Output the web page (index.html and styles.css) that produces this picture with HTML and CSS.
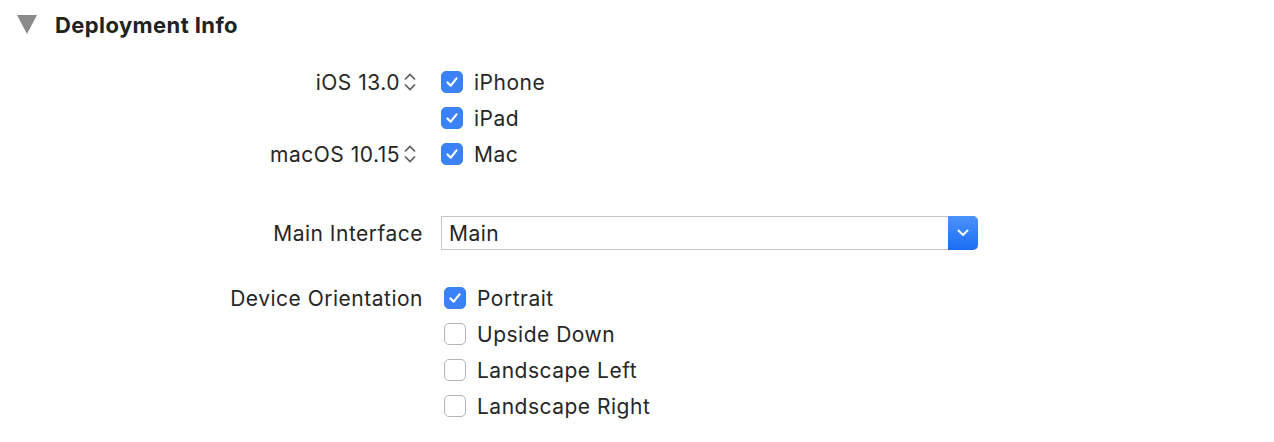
FILE: index.html
```html
<!DOCTYPE html>
<html>
<head>
<meta charset="utf-8">
<link rel="stylesheet" href="styles.css">
</head>
<body>
<div class="panel">
  <div class="header">
    <svg class="disclosure" width="20" height="19" viewBox="0 0 20 19"><polygon points="0,0 20,0 10,19" fill="#8a8a8a"/></svg>
    <span class="title">Deployment Info</span>
  </div>

  <div class="group platforms">
    <div class="row">
      <div class="label"><span>iOS 13.0</span>
        <svg class="stepper" width="14" height="18" viewBox="0 0 14 18"><polyline points="2,6.5 7,1.5 12,6.5" fill="none" stroke="#5a5a5a" stroke-width="1.6"/><polyline points="2,11.5 7,16.5 12,11.5" fill="none" stroke="#5a5a5a" stroke-width="1.6"/></svg>
      </div>
      <div class="control"><span class="cb on"><svg viewBox="0 0 22 22"><polyline points="6,11.5 9.6,15 16,7" fill="none" stroke="#fff" stroke-width="2.4" stroke-linecap="round" stroke-linejoin="round"/></svg></span><span class="text">iPhone</span></div>
    </div>
    <div class="row">
      <div class="label"></div>
      <div class="control"><span class="cb on"><svg viewBox="0 0 22 22"><polyline points="6,11.5 9.6,15 16,7" fill="none" stroke="#fff" stroke-width="2.4" stroke-linecap="round" stroke-linejoin="round"/></svg></span><span class="text">iPad</span></div>
    </div>
    <div class="row">
      <div class="label"><span>macOS 10.15</span>
        <svg class="stepper" width="14" height="18" viewBox="0 0 14 18"><polyline points="2,6.5 7,1.5 12,6.5" fill="none" stroke="#5a5a5a" stroke-width="1.6"/><polyline points="2,11.5 7,16.5 12,11.5" fill="none" stroke="#5a5a5a" stroke-width="1.6"/></svg>
      </div>
      <div class="control"><span class="cb on"><svg viewBox="0 0 22 22"><polyline points="6,11.5 9.6,15 16,7" fill="none" stroke="#fff" stroke-width="2.4" stroke-linecap="round" stroke-linejoin="round"/></svg></span><span class="text">Mac</span></div>
    </div>
  </div>

  <div class="group interface">
    <div class="row tall">
      <div class="label plain">Main Interface</div>
      <div class="control">
        <div class="popup">
          <span class="popup-text">Main</span>
          <span class="popup-btn"><svg width="12" height="8" viewBox="0 0 12 8"><polyline points="1.5,1.5 6,6 10.5,1.5" fill="none" stroke="#fff" stroke-width="2" stroke-linecap="round" stroke-linejoin="round"/></svg></span>
        </div>
      </div>
    </div>
  </div>

  <div class="group orientation">
    <div class="row">
      <div class="label plain">Device Orientation</div>
      <div class="control shift"><span class="cb on"><svg viewBox="0 0 22 22"><polyline points="6,11.5 9.6,15 16,7" fill="none" stroke="#fff" stroke-width="2.4" stroke-linecap="round" stroke-linejoin="round"/></svg></span><span class="text">Portrait</span></div>
    </div>
    <div class="row">
      <div class="label"></div>
      <div class="control shift"><span class="cb"></span><span class="text">Upside Down</span></div>
    </div>
    <div class="row">
      <div class="label"></div>
      <div class="control shift"><span class="cb"></span><span class="text">Landscape Left</span></div>
    </div>
    <div class="row">
      <div class="label"></div>
      <div class="control shift"><span class="cb"></span><span class="text">Landscape Right</span></div>
    </div>
  </div>
</div>
</body>
</html>
```

FILE: styles.css
```css
html, body {
  margin: 0;
  padding: 0;
  background: #ffffff;
}

.panel {
  font-family: Inter, "Liberation Sans", sans-serif;
  font-size: 21px;
  letter-spacing: 0.5px;
  color: #262626;
  width: 1274px;
  height: 442px;
  overflow: hidden;
}

.header {
  display: flex;
  align-items: center;
  height: 48px;
  padding-left: 17px;
  padding-top: 1px;
  box-sizing: border-box;
}

.disclosure {
  display: block;
  margin-right: 18px;
}

.title {
  font-weight: 700;
  font-size: 22px;
  letter-spacing: 0.4px;
  color: #222;
}

.group {
  display: flex;
  flex-direction: column;
}

.platforms {
  margin-top: 16px;
}

.interface {
  margin-top: 44px;
}

.orientation {
  margin-top: 30px;
}

.row {
  display: flex;
  align-items: center;
  height: 36px;
}

.row.tall {
  height: 34px;
}

.label {
  width: 423px;
  flex: none;
  display: flex;
  justify-content: flex-end;
  align-items: center;
  box-sizing: border-box;
  padding-right: 6px;
}

.label.plain {
  padding-right: 0;
}

.stepper {
  display: block;
  margin-left: 3px;
}

.control {
  display: flex;
  align-items: center;
  margin-left: 18px;
}

.control.shift {
  margin-left: 21px;
}

.cb {
  width: 22px;
  height: 22px;
  box-sizing: border-box;
  border-radius: 5px;
  border: 1px solid #b5b5b5;
  background: #fff;
  display: flex;
  flex: none;
}

.cb.on {
  background: #3a82f6;
  border-color: #3a82f6;
}

.cb svg {
  width: 20px;
  height: 20px;
}

.text {
  margin-left: 11px;
}

.popup {
  display: flex;
  width: 537px;
  height: 34px;
  box-sizing: border-box;
  border: 1px solid #c6c6c6;
  border-right: none;
  border-radius: 0 5px 5px 0;
  background: #fff;
}

.popup-text {
  flex: 1;
  display: flex;
  align-items: center;
  padding-left: 7px;
}

.popup-btn {
  width: 30px;
  margin: -1px 0;
  border-radius: 0 5px 5px 0;
  background: linear-gradient(#4b92f8, #1b6ef5);
  display: flex;
  align-items: center;
  justify-content: center;
}
```
